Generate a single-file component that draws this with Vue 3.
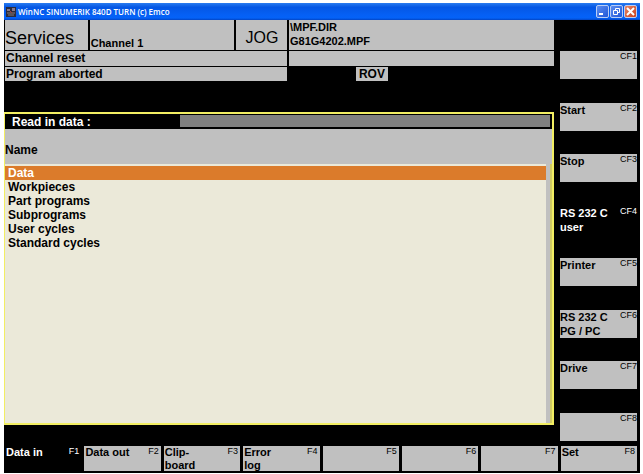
<script setup>
import { ref } from 'vue'

const entries = ['Data', 'Workpieces', 'Part programs', 'Subprograms', 'User cycles', 'Standard cycles']
const selected = ref(0)

const sideKeys = [
  { id: 'CF1', label: '' },
  { id: 'CF2', label: 'Start' },
  { id: 'CF3', label: 'Stop' },
  { id: 'CF4', label: 'RS 232 C\nuser', active: true },
  { id: 'CF5', label: 'Printer' },
  { id: 'CF6', label: 'RS 232 C\nPG / PC' },
  { id: 'CF7', label: 'Drive' },
  { id: 'CF8', label: '' }
]

const bottomKeys = [
  { id: 'F1', label: 'Data in', active: true },
  { id: 'F2', label: 'Data out' },
  { id: 'F3', label: 'Clip-\nboard' },
  { id: 'F4', label: 'Error\nlog' },
  { id: 'F5', label: '' },
  { id: 'F6', label: '' },
  { id: 'F7', label: '' },
  { id: 'F8', label: 'Set' }
]
</script>

<template>
  <div class="page">
    <div class="window">
      <header class="titlebar">
        <svg class="app-icon" viewBox="0 0 10 10" aria-hidden="true">
          <rect width="10" height="10" fill="#2b2b3c" />
          <path d="M1 2h3v2H1zM6 1h3v3H6z" fill="#85788a" />
          <path d="M1 6h8M2 8h6" stroke="#8c7c74" />
          <path d="M4 4l2 2" stroke="#a03c3c" />
        </svg>
        <h1 class="title">WinNC SINUMERIK 840D TURN (c) Emco</h1>
        <div class="controls">
          <button class="ctl" aria-label="Minimize">
            <svg viewBox="0 0 11 11"><path d="M2 8h4" stroke="#fff" stroke-width="2" /></svg>
          </button>
          <button class="ctl" aria-label="Restore">
            <svg viewBox="0 0 11 11" fill="none" stroke="#fff">
              <path d="M4.5 4V2.5h4v4H7" />
              <path d="M2.5 4.5h4v4h-4z" />
            </svg>
          </button>
          <button class="ctl close" aria-label="Close">
            <svg viewBox="0 0 11 11"><path d="M2 2l7 7M9 2l-7 7" stroke="#fff" stroke-width="2" /></svg>
          </button>
        </div>
      </header>

      <div class="main">
        <div class="content">
          <div class="status">
            <div class="cell area">Services</div>
            <div class="cell channel">Channel 1</div>
            <div class="cell mode">JOG</div>
            <div class="cell program">\MPF.DIR<br />G81G4202.MPF</div>
            <div class="cell message">Channel reset</div>
            <div class="cell"></div>
            <div class="cell message">Program aborted</div>
            <div class="flags"><span class="flag">ROV</span></div>
          </div>

          <section class="panel">
            <div class="prompt">
              <label class="prompt-label" for="read-in">Read in data :</label>
              <input id="read-in" class="prompt-input" type="text" />
            </div>
            <h2 class="column-name">Name</h2>
            <div class="list-area">
              <ul class="list">
                <li v-for="(entry, i) in entries" :key="entry">
                  <button class="entry" :class="{ selected: i === selected }" @click="selected = i">{{ entry }}</button>
                </li>
              </ul>
              <div class="track"></div>
            </div>
          </section>
        </div>

        <nav class="side-keys">
          <button v-for="key in sideKeys" :key="key.id" class="key" :class="{ active: key.active }">
            <span class="key-label">{{ key.label }}</span>
            <span class="key-id">{{ key.id }}</span>
          </button>
        </nav>
      </div>

      <nav class="bottom-keys">
        <button v-for="key in bottomKeys" :key="key.id" class="key" :class="{ active: key.active }">
          <span class="key-label">{{ key.label }}</span>
          <span class="key-id">{{ key.id }}</span>
        </button>
      </nav>
    </div>
  </div>
</template>

<style>
body {
  background: #fff;
}
</style>

<style scoped>
.page {
  box-sizing: border-box;
  min-height: 100vh;
  padding: 3px 3px 1px 4px;
  display: flex;
  font-family: "Liberation Sans", Arial, sans-serif;
  font-size: 11px;
  font-weight: bold;
  line-height: 14px;
  color: #000;
}
button,
input {
  font: inherit;
  color: inherit;
  border: 0;
  border-radius: 0;
  margin: 0;
  padding: 0;
}
.window {
  flex: 1;
  min-width: 0;
  display: flex;
  flex-direction: column;
  background: #000;
}
.titlebar {
  height: 17px;
  display: flex;
  align-items: center;
  gap: 2px;
  padding: 0 3px 0 2px;
  background: linear-gradient(#2a7cf0, #0557e4 25%, #0560f5 70%, #0462f8 88%, #0345c4);
  color: #fff;
}
.app-icon {
  width: 10px;
  height: 10px;
}
.title {
  flex: 1;
  margin: 0;
  font-family: "Open Sans", "Noto Sans", sans-serif;
  font-size: 8px;
  line-height: 14px;
  font-weight: 600;
}
.controls {
  display: flex;
  gap: 1px;
}
.ctl {
  box-sizing: border-box;
  width: 13px;
  height: 13px;
  border: 1px solid #b9cdf5;
  border-radius: 2px;
  background: linear-gradient(135deg, #5b8df0, #2258d8);
  display: flex;
}
.ctl svg {
  width: 11px;
  height: 11px;
}
.close {
  background: linear-gradient(135deg, #e98766, #c9401c);
}
.main {
  flex: 1;
  display: grid;
  grid-template-columns: 1fr 77px;
  gap: 6px;
  padding-right: 3px;
}
.content {
  display: flex;
  flex-direction: column;
  padding-bottom: 16px;
}
.status {
  display: grid;
  grid-template-columns: 83fr 145fr 51fr 266fr;
  grid-template-rows: 30px 15px 14px;
  gap: 1px 2px;
  padding-left: 1px;
  margin-bottom: 31px;
}
.cell {
  background: #c0c0c0;
  padding-left: 1px;
}
.area {
  font-size: 18px;
  font-weight: normal;
  line-height: 36px;
  padding-left: 0;
  overflow: hidden;
}
.channel {
  display: flex;
  align-items: flex-end;
}
.mode {
  font-size: 16px;
  font-weight: normal;
  line-height: 36px;
  text-align: center;
  overflow: hidden;
}
.message {
  grid-column: 1 / 4;
  font-size: 12px;
}
.flags {
  padding-left: 67px;
}
.flag {
  display: inline-block;
  width: 32px;
  background: #c0c0c0;
  text-align: center;
  font-size: 12px;
}
.panel {
  flex: 1;
  display: flex;
  flex-direction: column;
  border: 2px solid #f2ee62;
  border-left-width: 1px;
  background: #c0c0c0;
  font-size: 12px;
}
.prompt {
  display: flex;
  background: #000;
  padding: 1px 2px 2px 0;
}
.prompt-label {
  width: 175px;
  padding-left: 7px;
  box-sizing: border-box;
  color: #fff;
  line-height: 15px;
  height: 12px;
}
.prompt-input {
  flex: 1;
  min-width: 0;
  height: 12px;
  background: #808080;
}
.column-name {
  margin: 0;
  height: 35px;
  box-sizing: border-box;
  padding-top: 14px;
  font-size: 12px;
  line-height: 14px;
}
.list-area {
  flex: 1;
  display: grid;
  grid-template-columns: 1fr 4px;
  border-right: 2px solid #cfc964;
}
.list {
  margin: 0;
  padding: 2px 0 0;
  list-style: none;
  background: #ebe9d9;
}
.entry {
  display: block;
  width: 100%;
  height: 14px;
  padding-left: 3px;
  text-align: left;
  background: transparent;
}
.selected {
  background: #db7b2b;
  color: #fff;
}
.side-keys {
  display: flex;
  flex-direction: column;
  justify-content: space-between;
  padding-top: 31px;
}
.key {
  display: flex;
  justify-content: space-between;
  align-items: flex-start;
  background: #c0c0c0;
  color: #000;
  text-align: left;
}
.key.active {
  background: #000;
  color: #fff;
}
.side-keys .key {
  height: 28px;
}
.key-label {
  white-space: pre;
}
.key-id {
  font-size: 9px;
  line-height: 10px;
  font-weight: normal;
}
.bottom-keys {
  display: grid;
  grid-template-columns: repeat(8, 1fr);
  gap: 3px;
  padding: 5px 3px 2px 1px;
}
.bottom-keys .key {
  height: 25px;
  padding: 0 2px 0 1px;
  line-height: 13px;
}
</style>
